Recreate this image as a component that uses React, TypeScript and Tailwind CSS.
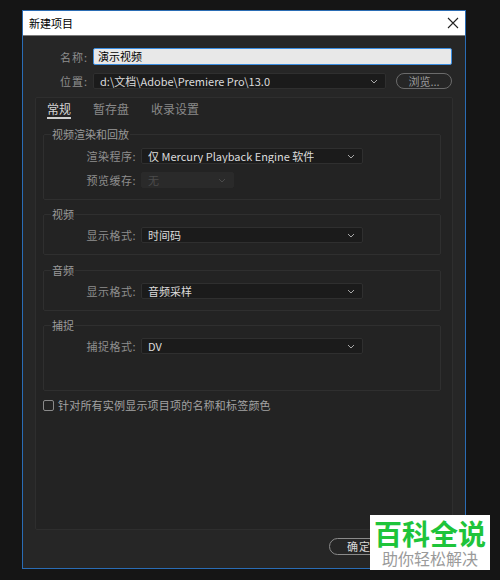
import React from "react";

const font = { fontFamily: '"Noto Sans CJK SC", "Noto Sans", sans-serif' };

function Chevron({ dim }: { dim?: boolean }) {
  return (
    <svg width="8" height="5" viewBox="0 0 8 5" className="shrink-0">
      <path d="M1 1 L4 4 L7 1" fill="none" stroke={dim ? "#4a4a4a" : "#a8a8a8"} strokeWidth="1" />
    </svg>
  );
}

function Select({ value, width, dim }: { value: string; width: string; dim?: boolean }) {
  return (
    <div
      className={`${width} h-[16px] flex items-center justify-between pl-[6px] pr-[7px] rounded-[2px] border ${
        dim ? "bg-[#2a2a2a] border-[#2a2a2a] text-[#4c4c4c]" : "bg-[#1b1b1b] border-[#2f2f2f] text-[#dcdcdc]"
      } text-[11px] leading-[14px]`}
    >
      <span className="truncate">{value}</span>
      <Chevron dim={dim} />
    </div>
  );
}

function Row({ label, children }: { label: string; children: React.ReactNode }) {
  return (
    <div className="flex items-center">
      <div className="w-[92px] text-right text-[11px] leading-[14px] text-[#8e8e8e] tracking-[0.5px]">{label}</div>
      <div className="ml-[5px]">{children}</div>
    </div>
  );
}

function Group({
  title,
  children,
  className,
}: {
  title: string;
  children: React.ReactNode;
  className: string;
}) {
  return (
    <fieldset className={`ml-[7px] w-[398px] border border-[#2f2f2f] rounded-[2px] pl-[7px] ${className}`}>
      <legend className="px-[1px] text-[11px] leading-[14px] text-[#9a9a9a]">{title}</legend>
      <div className="-ml-[7px] flex flex-col gap-[8px]">{children}</div>
    </fieldset>
  );
}

export default function App() {
  return (
    <div className="relative w-[500px] h-[580px] bg-[#151515] pt-[10px] pl-[22px] overflow-hidden" style={font}>
      <div className="w-[444px] h-[559px] border border-[#2a6cb4] bg-[#262626] flex flex-col">
        {/* title bar */}
        <div className="h-[25px] bg-white border-b border-[#7c7c7c] flex items-center justify-between pl-[6px] pr-[6px]">
          <span className="text-[11px] text-black">新建项目</span>
          <svg width="12" height="12" viewBox="0 0 12 12">
            <path d="M1 1 L11 11 M11 1 L1 11" stroke="#222" strokeWidth="1.1" />
          </svg>
        </div>

        {/* name / location */}
        <div className="mt-[12px] flex items-center">
          <div className="w-[65px] text-right text-[11px] leading-[14px] text-[#8e8e8e] tracking-[1px]">名称:</div>
          <div className="ml-[5px] w-[359px] h-[17px] bg-[#e8e8e8] border border-[#3b8de0] rounded-[2px] pl-[4px] flex items-center text-[11px] text-black">
            演示视频
          </div>
        </div>
        <div className="mt-[8px] flex items-center">
          <div className="w-[65px] text-right text-[11px] leading-[14px] text-[#8e8e8e] tracking-[1px]">位置:</div>
          <div className="ml-[5px]">
            <Select value="d:\文档\Adobe\Premiere Pro\13.0" width="w-[293px]" />
          </div>
          <div className="ml-[10px] w-[56px] h-[16px] rounded-full border border-[#6b6b6b] flex items-center justify-center text-[11px] leading-[14px] text-[#9a9a9a]">
            浏览...
          </div>
        </div>

        {/* main panel */}
        <div className="mt-[8px] ml-[12px] w-[418px] h-[433px] bg-[#232323] border border-[#2e2e2e] rounded-[2px] pt-[4px] flex flex-col">
          <div className="flex pl-[11px] gap-[22px] text-[12px] leading-[14px]">
            <div className="text-[#d4d4d4]">
              常规
              <div className="mt-[1px] h-[2px] bg-[#d0d0d0]" />
            </div>
            <div className="text-[#8a8a8a]">暂存盘</div>
            <div className="text-[#8a8a8a]">收录设置</div>
          </div>

          <Group title="视频渲染和回放" className="mt-[8px] pt-[7px] pb-[11px]">
            <Row label="渲染程序:">
              <Select value="仅 Mercury Playback Engine 软件" width="w-[222px]" />
            </Row>
            <Row label="预览缓存:">
              <Select value="无" width="w-[93px]" dim />
            </Row>
          </Group>

          <Group title="视频" className="mt-[7px] pt-[6px] pb-[11px]">
            <Row label="显示格式:">
              <Select value="时间码" width="w-[222px]" />
            </Row>
          </Group>

          <Group title="音频" className="mt-[8px] pt-[6px] pb-[11px]">
            <Row label="显示格式:">
              <Select value="音频采样" width="w-[222px]" />
            </Row>
          </Group>

          <Group title="捕捉" className="mt-[7px] pt-[6px] pb-[36px]">
            <Row label="捕捉格式:">
              <Select value="DV" width="w-[222px]" />
            </Row>
          </Group>

          <div className="mt-[7px] ml-[7px] flex items-center">
            <div className="w-[11px] h-[11px] border border-[#8a8a8a] rounded-[2px]" />
            <span className="ml-[4px] text-[11px] leading-[14px] text-[#a2a2a2] tracking-[0.2px]">
              针对所有实例显示项目项的名称和标签颜色
            </span>
          </div>
        </div>

        {/* buttons (partly hidden by the watermark) */}
        <div className="mt-[8px] flex pl-[306px]">
          <div className="w-[56px] h-[17px] rounded-full border border-[#8a8a8a] flex items-center pl-[17px] text-[11px] text-[#d8d8d8] tracking-[1px]">
            确定
          </div>
        </div>
      </div>

      {/* watermark */}
      <div className="absolute left-[370px] top-[515px] w-[120px] h-[55px] bg-white flex flex-col items-center pt-[3px]">
        <div className="text-[28px] leading-[30px] font-bold text-[#1ec43a]">百科全说</div>
        <div className="mt-[1px] text-[16px] leading-[18px] text-[#9a9a9a]">助你轻松解决</div>
      </div>
    </div>
  );
}
